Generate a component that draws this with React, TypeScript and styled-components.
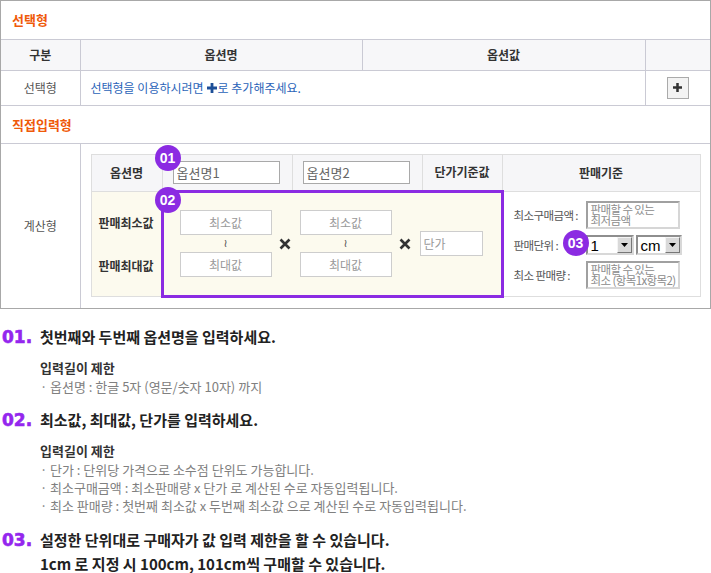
import styled, { createGlobalStyle } from 'styled-components'

const purple = '#8b2be2'

const GlobalStyle = createGlobalStyle`
  * { box-sizing: border-box; }
  body {
    margin: 0;
    background: #fff;
    font-family: 'Noto Sans CJK KR', 'Noto Sans', sans-serif;
    font-size: 12px;
    color: #555;
  }
`

const Frame = styled.div`
  width: 711px;
  border: 1px solid #a8a8a8;
`

const OptionTable = styled.table`
  width: 709px;
  border-collapse: collapse;
  border-style: hidden;
  table-layout: fixed;

  & > tbody > tr > td,
  & > tbody > tr > th {
    border: 1px solid #cacad4;
    padding: 0;
  }
`

const TitleCell = styled.td`
  height: 38px;
  padding-left: 11px !important;
  color: #ef5a0a;
  font-size: 13px;
  font-weight: bold;
  text-align: left;
`

const HeadCell = styled.th`
  height: 31px;
  background: #f7f7f9;
  color: #333;
  font-size: 12px;
  font-weight: bold;
`

const Cell = styled.td<{ $align?: string }>`
  height: 35px;
  text-align: ${(p) => p.$align || 'center'};
  color: #555;
`

const Notice = styled.span`
  display: inline-flex;
  align-items: center;
  padding-left: 10px;
  color: #2a63b8;
  font-size: 12px;
  svg {
    margin: 0 1px 0 3px;
  }
`

const AddButton = styled.button`
  width: 22px;
  height: 22px;
  padding: 0;
  display: inline-flex;
  align-items: center;
  justify-content: center;
  background: #f3f3f3;
  border: 1px solid #aaa;
  vertical-align: middle;
`

const CalcCell = styled.td`
  height: 163px;
  padding: 10px !important;
`

const CalcTable = styled.table`
  width: 609px;
  border-collapse: collapse;
  table-layout: fixed;
  border: 1px solid #dedede;

  td,
  th {
    border: 1px solid #dedede;
    padding: 0;
  }
`

const CalcHead = styled.th<{ $tone: 'gray' | 'cream' }>`
  background: ${(p) => (p.$tone === 'gray' ? '#f6f6f8' : '#fcfaee')};
  color: #333;
  font-size: 12px;
  font-weight: bold;
  line-height: ${(p) => (p.$tone === 'gray' ? '18px' : '43px')};
`

const NameCell = styled.td`
  position: relative;
  height: 37px;
  background: #f6f6f8;
  padding-left: 10px !important;
`

const RangeCell = styled.td`
  position: relative;
  height: 105px;
  background: #fcfaee;
  border: 3px solid ${purple} !important;
`

const RangeRow = styled.div`
  display: flex;
  align-items: center;
  padding-left: 16px;
`

const RangeColumn = styled.div`
  display: flex;
  flex-direction: column;
  align-items: center;
`

const TextInput = styled.input<{ $w: number; $center?: boolean; $dark?: boolean }>`
  width: ${(p) => p.$w}px;
  height: ${(p) => (p.$dark ? 23 : 25)}px;
  padding: 0 3px;
  border: 1px solid ${(p) => (p.$dark ? '#a9a9a9' : '#cdcdcd')};
  background: #fff;
  font-family: 'Noto Sans CJK KR', sans-serif;
  font-size: ${(p) => (p.$dark ? 13 : 12)}px;
  color: #666;
  text-align: ${(p) => (p.$center ? 'center' : 'left')};
  outline: none;
  &::placeholder {
    color: #999;
  }
`

const Tilde = styled.span`
  height: 17px;
  line-height: 17px;
  font-family: 'DejaVu Sans', sans-serif;
  font-size: 11px;
  color: #555;
`

const Times = styled.span`
  display: flex;
  width: 12px;
  margin: 0 9px 0 7px;
`

const CriteriaCell = styled.td`
  background: #fff;
  padding: 0 10px !important;
`

const CriteriaGrid = styled.div`
  display: grid;
  grid-template-columns: 72px auto;
  row-gap: 6px;
  align-items: center;
  padding-top: 3px;
`

const Label = styled.span`
  color: #555;
  font-size: 11.5px;
  letter-spacing: -0.6px;
  white-space: nowrap;
`

const Memo = styled.textarea`
  width: 94px;
  height: 28px;
  padding: 1px 3px;
  resize: none;
  overflow: hidden;
  white-space: pre;
  border: 2px solid;
  border-color: #a0a0a0 #d6d6d6 #d6d6d6 #a0a0a0;
  font-family: 'Noto Sans CJK KR', sans-serif;
  font-size: 11.5px;
  letter-spacing: -0.6px;
  line-height: 11px;
  &::placeholder {
    color: #8c8c8c;
  }
`

const SelectRow = styled.div`
  position: relative;
  display: flex;
  gap: 2px;
`

const FakeSelect = styled.div<{ $w: number }>`
  display: flex;
  align-items: center;
  width: ${(p) => p.$w}px;
  height: 20px;
  border: 2px solid;
  border-color: #8e8e8e #d8d8d8 #d8d8d8 #8e8e8e;
  background: #fff;
`

const SelectValue = styled.span`
  flex: 1;
  padding-left: 3px;
  font-family: 'Liberation Sans', sans-serif;
  font-size: 15px;
  color: #000;
`

const SelectArrow = styled.span`
  display: flex;
  align-items: center;
  justify-content: center;
  width: 15px;
  height: 16px;
  background: #d9d9d9;
  border: 1px solid;
  border-color: #f4f4f4 #777 #777 #f4f4f4;
`

const Badge = styled.span<{ $top: number; $left: number }>`
  position: absolute;
  top: ${(p) => p.$top}px;
  left: ${(p) => p.$left}px;
  z-index: 2;
  width: 26px;
  height: 26px;
  border-radius: 50%;
  background: ${purple};
  color: #fff;
  font-family: 'Liberation Sans', sans-serif;
  font-size: 14px;
  font-weight: bold;
  line-height: 26px;
  text-align: center;
`

const Guide = styled.div`
  padding: 16px 0 0 2px;
`

const Step = styled.section`
  & + & {
    margin-top: 12px;
  }
`

const StepHead = styled.div`
  display: flex;
  font-size: 15px;
  font-weight: 600;
  line-height: 24px;
  color: #222;
`

const StepNo = styled.span`
  flex: none;
  width: 38px;
  font-family: 'DejaVu Sans', sans-serif;
  font-size: 17px;
  font-weight: bold;
  color: #9426ee;
  -webkit-text-stroke: 0.6px #9426ee;
`

const SubTitle = styled.div`
  margin: 9px 0 0 38px;
  font-size: 13px;
  font-weight: bold;
  line-height: 20px;
  color: #333;
`

const Bullets = styled.ul`
  margin: 0 0 0 38px;
  padding: 0;
  list-style: none;
`

const Bullet = styled.li`
  display: flex;
  font-size: 13px;
  line-height: 18.3px;
  color: #808080;
  &::before {
    content: '·';
    width: 10px;
    flex: none;
  }
`

const PlusIcon = ({ size, color }: { size: number; color: string }) => (
  <svg width={size} height={size} viewBox="0 0 10 10">
    <path d="M3.6 0h2.8v3.6H10v2.8H6.4V10H3.6V6.4H0V3.6h3.6z" fill={color} />
  </svg>
)

const CrossIcon = () => (
  <svg width="12" height="12" viewBox="0 0 12 12">
    <path d="M1.5 1.5l9 9M10.5 1.5l-9 9" stroke="#333" strokeWidth="2.6" />
  </svg>
)

const ArrowIcon = () => (
  <svg width="7" height="4" viewBox="0 0 7 4">
    <path d="M0 0h7L3.5 4z" fill="#000" />
  </svg>
)

const RangeInputs = () => (
  <RangeColumn>
    <TextInput $w={92} $center placeholder="최소값" />
    <Tilde>≀</Tilde>
    <TextInput $w={92} $center placeholder="최대값" />
  </RangeColumn>
)

const App = () => {
  return (
    <>
      <GlobalStyle />
      <Frame>
        <OptionTable>
          <colgroup>
            <col style={{ width: 79 }} />
            <col style={{ width: 282 }} />
            <col style={{ width: 283 }} />
            <col style={{ width: 65 }} />
          </colgroup>
          <tbody>
            <tr>
              <TitleCell colSpan={4}>선택형</TitleCell>
            </tr>
            <tr>
              <HeadCell>구분</HeadCell>
              <HeadCell>옵션명</HeadCell>
              <HeadCell>옵션값</HeadCell>
              <HeadCell />
            </tr>
            <tr>
              <Cell>선택형</Cell>
              <Cell colSpan={2} $align="left">
                <Notice>
                  선택형을 이용하시려면
                  <PlusIcon size={10} color="#1d4f98" />로 추가해주세요.
                </Notice>
              </Cell>
              <Cell>
                <AddButton type="button">
                  <PlusIcon size={9} color="#333" />
                </AddButton>
              </Cell>
            </tr>
            <tr>
              <TitleCell colSpan={4}>직접입력형</TitleCell>
            </tr>
            <tr>
              <Cell>계산형</Cell>
              <CalcCell colSpan={3}>
                <CalcTable>
                  <colgroup>
                    <col style={{ width: 71 }} />
                    <col style={{ width: 130 }} />
                    <col style={{ width: 130 }} />
                    <col style={{ width: 80 }} />
                    <col style={{ width: 198 }} />
                  </colgroup>
                  <tbody>
                    <tr>
                      <CalcHead $tone="gray">옵션명</CalcHead>
                      <NameCell>
                        <Badge $top={-10} $left={-8}>01</Badge>
                        <TextInput $w={107} $dark defaultValue="옵션명1" />
                      </NameCell>
                      <NameCell>
                        <TextInput $w={107} $dark defaultValue="옵션명2" />
                      </NameCell>
                      <CalcHead $tone="gray">단가기준값</CalcHead>
                      <CalcHead $tone="gray">판매기준</CalcHead>
                    </tr>
                    <tr>
                      <CalcHead $tone="cream">
                        판매최소값
                        <br />
                        판매최대값
                      </CalcHead>
                      <RangeCell colSpan={3}>
                        <Badge $top={-6} $left={-9}>02</Badge>
                        <RangeRow>
                          <RangeInputs />
                          <Times>
                            <CrossIcon />
                          </Times>
                          <RangeInputs />
                          <Times>
                            <CrossIcon />
                          </Times>
                          <TextInput $w={63} placeholder="단가" />
                        </RangeRow>
                      </RangeCell>
                      <CriteriaCell>
                        <CriteriaGrid>
                          <Label>최소구매금액 :</Label>
                          <Memo placeholder={'판매할 수 있는\n최저금액'} />
                          <Label>판매단위 :</Label>
                          <SelectRow>
                            <Badge $top={-5} $left={-23}>03</Badge>
                            <FakeSelect $w={48}>
                              <SelectValue>1</SelectValue>
                              <SelectArrow>
                                <ArrowIcon />
                              </SelectArrow>
                            </FakeSelect>
                            <FakeSelect $w={46}>
                              <SelectValue>cm</SelectValue>
                              <SelectArrow>
                                <ArrowIcon />
                              </SelectArrow>
                            </FakeSelect>
                          </SelectRow>
                          <Label>최소 판매량 :</Label>
                          <Memo placeholder={'판매할 수 있는\n최소 (항목1x항목2)'} />
                        </CriteriaGrid>
                      </CriteriaCell>
                    </tr>
                  </tbody>
                </CalcTable>
              </CalcCell>
            </tr>
          </tbody>
        </OptionTable>
      </Frame>

      <Guide>
        <Step>
          <StepHead>
            <StepNo>01.</StepNo>
            <span>첫번째와 두번째 옵션명을 입력하세요.</span>
          </StepHead>
          <SubTitle>입력길이 제한</SubTitle>
          <Bullets>
            <Bullet>옵션명 : 한글 5자 (영문/숫자 10자) 까지</Bullet>
          </Bullets>
        </Step>
        <Step>
          <StepHead>
            <StepNo>02.</StepNo>
            <span>최소값, 최대값, 단가를 입력하세요.</span>
          </StepHead>
          <SubTitle>입력길이 제한</SubTitle>
          <Bullets>
            <Bullet>단가 : 단위당 가격으로 소수점 단위도 가능합니다.</Bullet>
            <Bullet>최소구매금액 : 최소판매량 x 단가 로 계산된 수로 자동입력됩니다.</Bullet>
            <Bullet>최소 판매량 : 첫번째 최소값 x 두번째 최소값 으로 계산된 수로 자동입력됩니다.</Bullet>
          </Bullets>
        </Step>
        <Step>
          <StepHead>
            <StepNo>03.</StepNo>
            <span>
              설정한 단위대로 구매자가 값 입력 제한을 할 수 있습니다.
              <br />
              1cm 로 지정 시 100cm, 101cm씩 구매할 수 있습니다.
            </span>
          </StepHead>
        </Step>
      </Guide>
    </>
  )
}

export default App
